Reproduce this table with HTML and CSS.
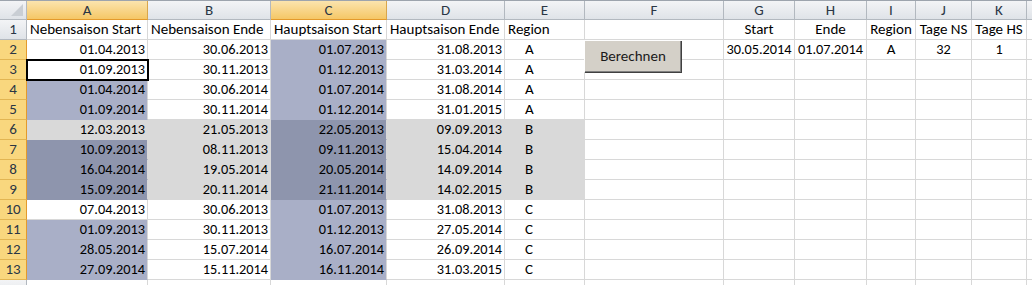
FILE: index.html
```html
<!DOCTYPE html>
<html lang="de">
<head>
<meta charset="utf-8">
<title>Saison</title>
<link rel="stylesheet" href="styles.css">
</head>
<body>
<div class="wrap">
<div class="sheet">
  <div class="c corner"><span class="tri"></span></div>
  <div class="c ch csel">A</div><div class="c ch">B</div><div class="c ch csel">C</div><div class="c ch">D</div><div class="c ch">E</div><div class="c ch">F</div><div class="c ch">G</div><div class="c ch">H</div><div class="c ch">I</div><div class="c ch">J</div><div class="c ch">K</div><div class="c ch last"></div>

  <div class="c rh">1</div>
  <div class="c">Nebensaison Start</div><div class="c">Nebensaison Ende</div><div class="c">Hauptsaison Start</div><div class="c">Hauptsaison Ende</div><div class="c">Region</div><div class="c"></div><div class="c m">Start</div><div class="c m">Ende</div><div class="c m">Region</div><div class="c m">Tage NS</div><div class="c m">Tage HS</div><div class="c"></div>

  <div class="c rh rsel">2</div>
  <div class="c r">01.04.2013</div><div class="c r">30.06.2013</div><div class="c r sel">01.07.2013</div><div class="c r">31.08.2013</div><div class="c reg">A</div><div class="c"></div><div class="c m d">30.05.2014</div><div class="c m d">01.07.2014</div><div class="c m">A</div><div class="c m d">32</div><div class="c m d">1</div><div class="c"></div>

  <div class="c rh rsel">3</div>
  <div class="c r act">01.09.2013</div><div class="c r">30.11.2013</div><div class="c r sel">01.12.2013</div><div class="c r">31.03.2014</div><div class="c reg">A</div><div class="c"></div><div class="c"></div><div class="c"></div><div class="c"></div><div class="c"></div><div class="c"></div><div class="c"></div>

  <div class="c rh rsel">4</div>
  <div class="c r sel">01.04.2014</div><div class="c r">30.06.2014</div><div class="c r sel">01.07.2014</div><div class="c r">31.08.2014</div><div class="c reg">A</div><div class="c"></div><div class="c"></div><div class="c"></div><div class="c"></div><div class="c"></div><div class="c"></div><div class="c"></div>

  <div class="c rh rsel">5</div>
  <div class="c r sel">01.09.2014</div><div class="c r">30.11.2014</div><div class="c r sel">01.12.2014</div><div class="c r">31.01.2015</div><div class="c reg">A</div><div class="c"></div><div class="c"></div><div class="c"></div><div class="c"></div><div class="c"></div><div class="c"></div><div class="c"></div>

  <div class="c rh rsel">6</div>
  <div class="c r gray">12.03.2013</div><div class="c r gray">21.05.2013</div><div class="c r seld">22.05.2013</div><div class="c r gray">09.09.2013</div><div class="c reg gray">B</div><div class="c"></div><div class="c"></div><div class="c"></div><div class="c"></div><div class="c"></div><div class="c"></div><div class="c"></div>

  <div class="c rh rsel">7</div>
  <div class="c r seld">10.09.2013</div><div class="c r gray">08.11.2013</div><div class="c r seld">09.11.2013</div><div class="c r gray">15.04.2014</div><div class="c reg gray">B</div><div class="c"></div><div class="c"></div><div class="c"></div><div class="c"></div><div class="c"></div><div class="c"></div><div class="c"></div>

  <div class="c rh rsel">8</div>
  <div class="c r seld">16.04.2014</div><div class="c r gray">19.05.2014</div><div class="c r seld">20.05.2014</div><div class="c r gray">14.09.2014</div><div class="c reg gray">B</div><div class="c"></div><div class="c"></div><div class="c"></div><div class="c"></div><div class="c"></div><div class="c"></div><div class="c"></div>

  <div class="c rh rsel">9</div>
  <div class="c r seld">15.09.2014</div><div class="c r gray">20.11.2014</div><div class="c r seld">21.11.2014</div><div class="c r gray">14.02.2015</div><div class="c reg gray">B</div><div class="c"></div><div class="c"></div><div class="c"></div><div class="c"></div><div class="c"></div><div class="c"></div><div class="c"></div>

  <div class="c rh rsel">10</div>
  <div class="c r">07.04.2013</div><div class="c r">30.06.2013</div><div class="c r sel">01.07.2013</div><div class="c r">31.08.2013</div><div class="c reg">C</div><div class="c"></div><div class="c"></div><div class="c"></div><div class="c"></div><div class="c"></div><div class="c"></div><div class="c"></div>

  <div class="c rh rsel">11</div>
  <div class="c r sel">01.09.2013</div><div class="c r">30.11.2013</div><div class="c r sel">01.12.2013</div><div class="c r">27.05.2014</div><div class="c reg">C</div><div class="c"></div><div class="c"></div><div class="c"></div><div class="c"></div><div class="c"></div><div class="c"></div><div class="c"></div>

  <div class="c rh rsel">12</div>
  <div class="c r sel">28.05.2014</div><div class="c r">15.07.2014</div><div class="c r sel">16.07.2014</div><div class="c r">26.09.2014</div><div class="c reg">C</div><div class="c"></div><div class="c"></div><div class="c"></div><div class="c"></div><div class="c"></div><div class="c"></div><div class="c"></div>

  <div class="c rh rsel">13</div>
  <div class="c r sel">27.09.2014</div><div class="c r">15.11.2014</div><div class="c r sel">16.11.2014</div><div class="c r">31.03.2015</div><div class="c reg">C</div><div class="c"></div><div class="c"></div><div class="c"></div><div class="c"></div><div class="c"></div><div class="c"></div><div class="c"></div>

  <div class="c rh"></div>
  <div class="c"></div><div class="c"></div><div class="c"></div><div class="c"></div><div class="c"></div><div class="c"></div><div class="c"></div><div class="c"></div><div class="c"></div><div class="c"></div><div class="c"></div><div class="c"></div>
</div>
<button class="btn" type="button">Berechnen</button>
</div>
</body>
</html>
```
FILE: styles.css
```css
html, body {
  margin: 0;
  padding: 0;
  background: #ffffff;
  overflow: hidden;
}
.wrap {
  position: relative;
  width: 1032px;
  height: 285px;
  overflow: hidden;
}
.sheet {
  display: grid;
  grid-template-columns: 27px 121px 123px 116px 118px 80px 139px 71px 72px 49px 56px 55px 1fr;
  grid-auto-rows: 20px;
  grid-template-rows: 19px;
  border-top: 1px solid #9da4ad;
  font-family: Carlito, Lato, "Open Sans", sans-serif;
  font-size: 15px;
  color: #000;
}
.c {
  box-sizing: border-box;
  border-right: 1px solid #d8d8d8;
  border-bottom: 1px solid #d8d8d8;
  line-height: 19px;
  padding: 0 3px;
  white-space: nowrap;
  overflow: hidden;
  background: #fff;
}
.r { text-align: right; padding-right: 2px; font-size: 14.3px; }
.d { font-size: 14.3px; }
.m { text-align: center; padding: 0; }
.reg { padding-left: 20px; }
.sel {
  background: #a9afc7;
  border-bottom-color: #a9afc7;
}
.seld {
  background: #8e95ad;
  border-bottom-color: #8e95ad;
  border-right-color: #d9d9d9;
}
.gray {
  background: #d9d9d9;
  border-color: #d9d9d9;
}
.act {
  outline: 2px solid #000;
  outline-offset: -1px;
  position: relative;
  z-index: 1;
}
.corner {
  background: linear-gradient(#f3f4f6, #dfe3e8);
  border-right: 1px solid #b2b8bf;
  border-bottom: 1px solid #b2b8bf;
  position: relative;
}
.tri {
  position: absolute;
  right: 3px;
  bottom: 3px;
  width: 0;
  height: 0;
  border-left: 12px solid transparent;
  border-bottom: 12px solid #c9ced4;
}
.ch {
  background: linear-gradient(#f3f4f6, #dfe3e8);
  border-right: 1px solid #b2b8bf;
  border-bottom: 1px solid #b2b8bf;
  text-align: center;
  color: #2a3645;
  line-height: 18px;
  padding: 0;
}
.ch.csel {
  background: linear-gradient(#fbe4ae, #f5c766);
  border-right-color: #d9a64c;
  border-bottom: 1px solid #e39a2c;
}
.rh {
  background: linear-gradient(#f3f4f6, #dfe3e8);
  border-right: 1px solid #b2b8bf;
  border-bottom: 1px solid #b2b8bf;
  text-align: center;
  color: #2a3645;
  padding: 0;
}
.rh.rsel {
  background: #f9d77e;
  border-right: 1px solid #e39a2c;
  border-bottom: 1px solid #e2b552;
}
.btn {
  position: absolute;
  left: 584px;
  top: 40px;
  width: 97px;
  height: 32px;
  margin: 0;
  padding: 0 0 2px 0;
  background: #d4d0c8;
  border: none;
  border-top: 1px solid #ffffff;
  border-left: 1px solid #ffffff;
  box-shadow: inset -1px -1px 0 #808080, 1px 1px 0 #404040;
  font-family: Carlito, Lato, "Open Sans", sans-serif;
  font-size: 15px;
  color: #1a1a1a;
  text-align: center;
}
```
